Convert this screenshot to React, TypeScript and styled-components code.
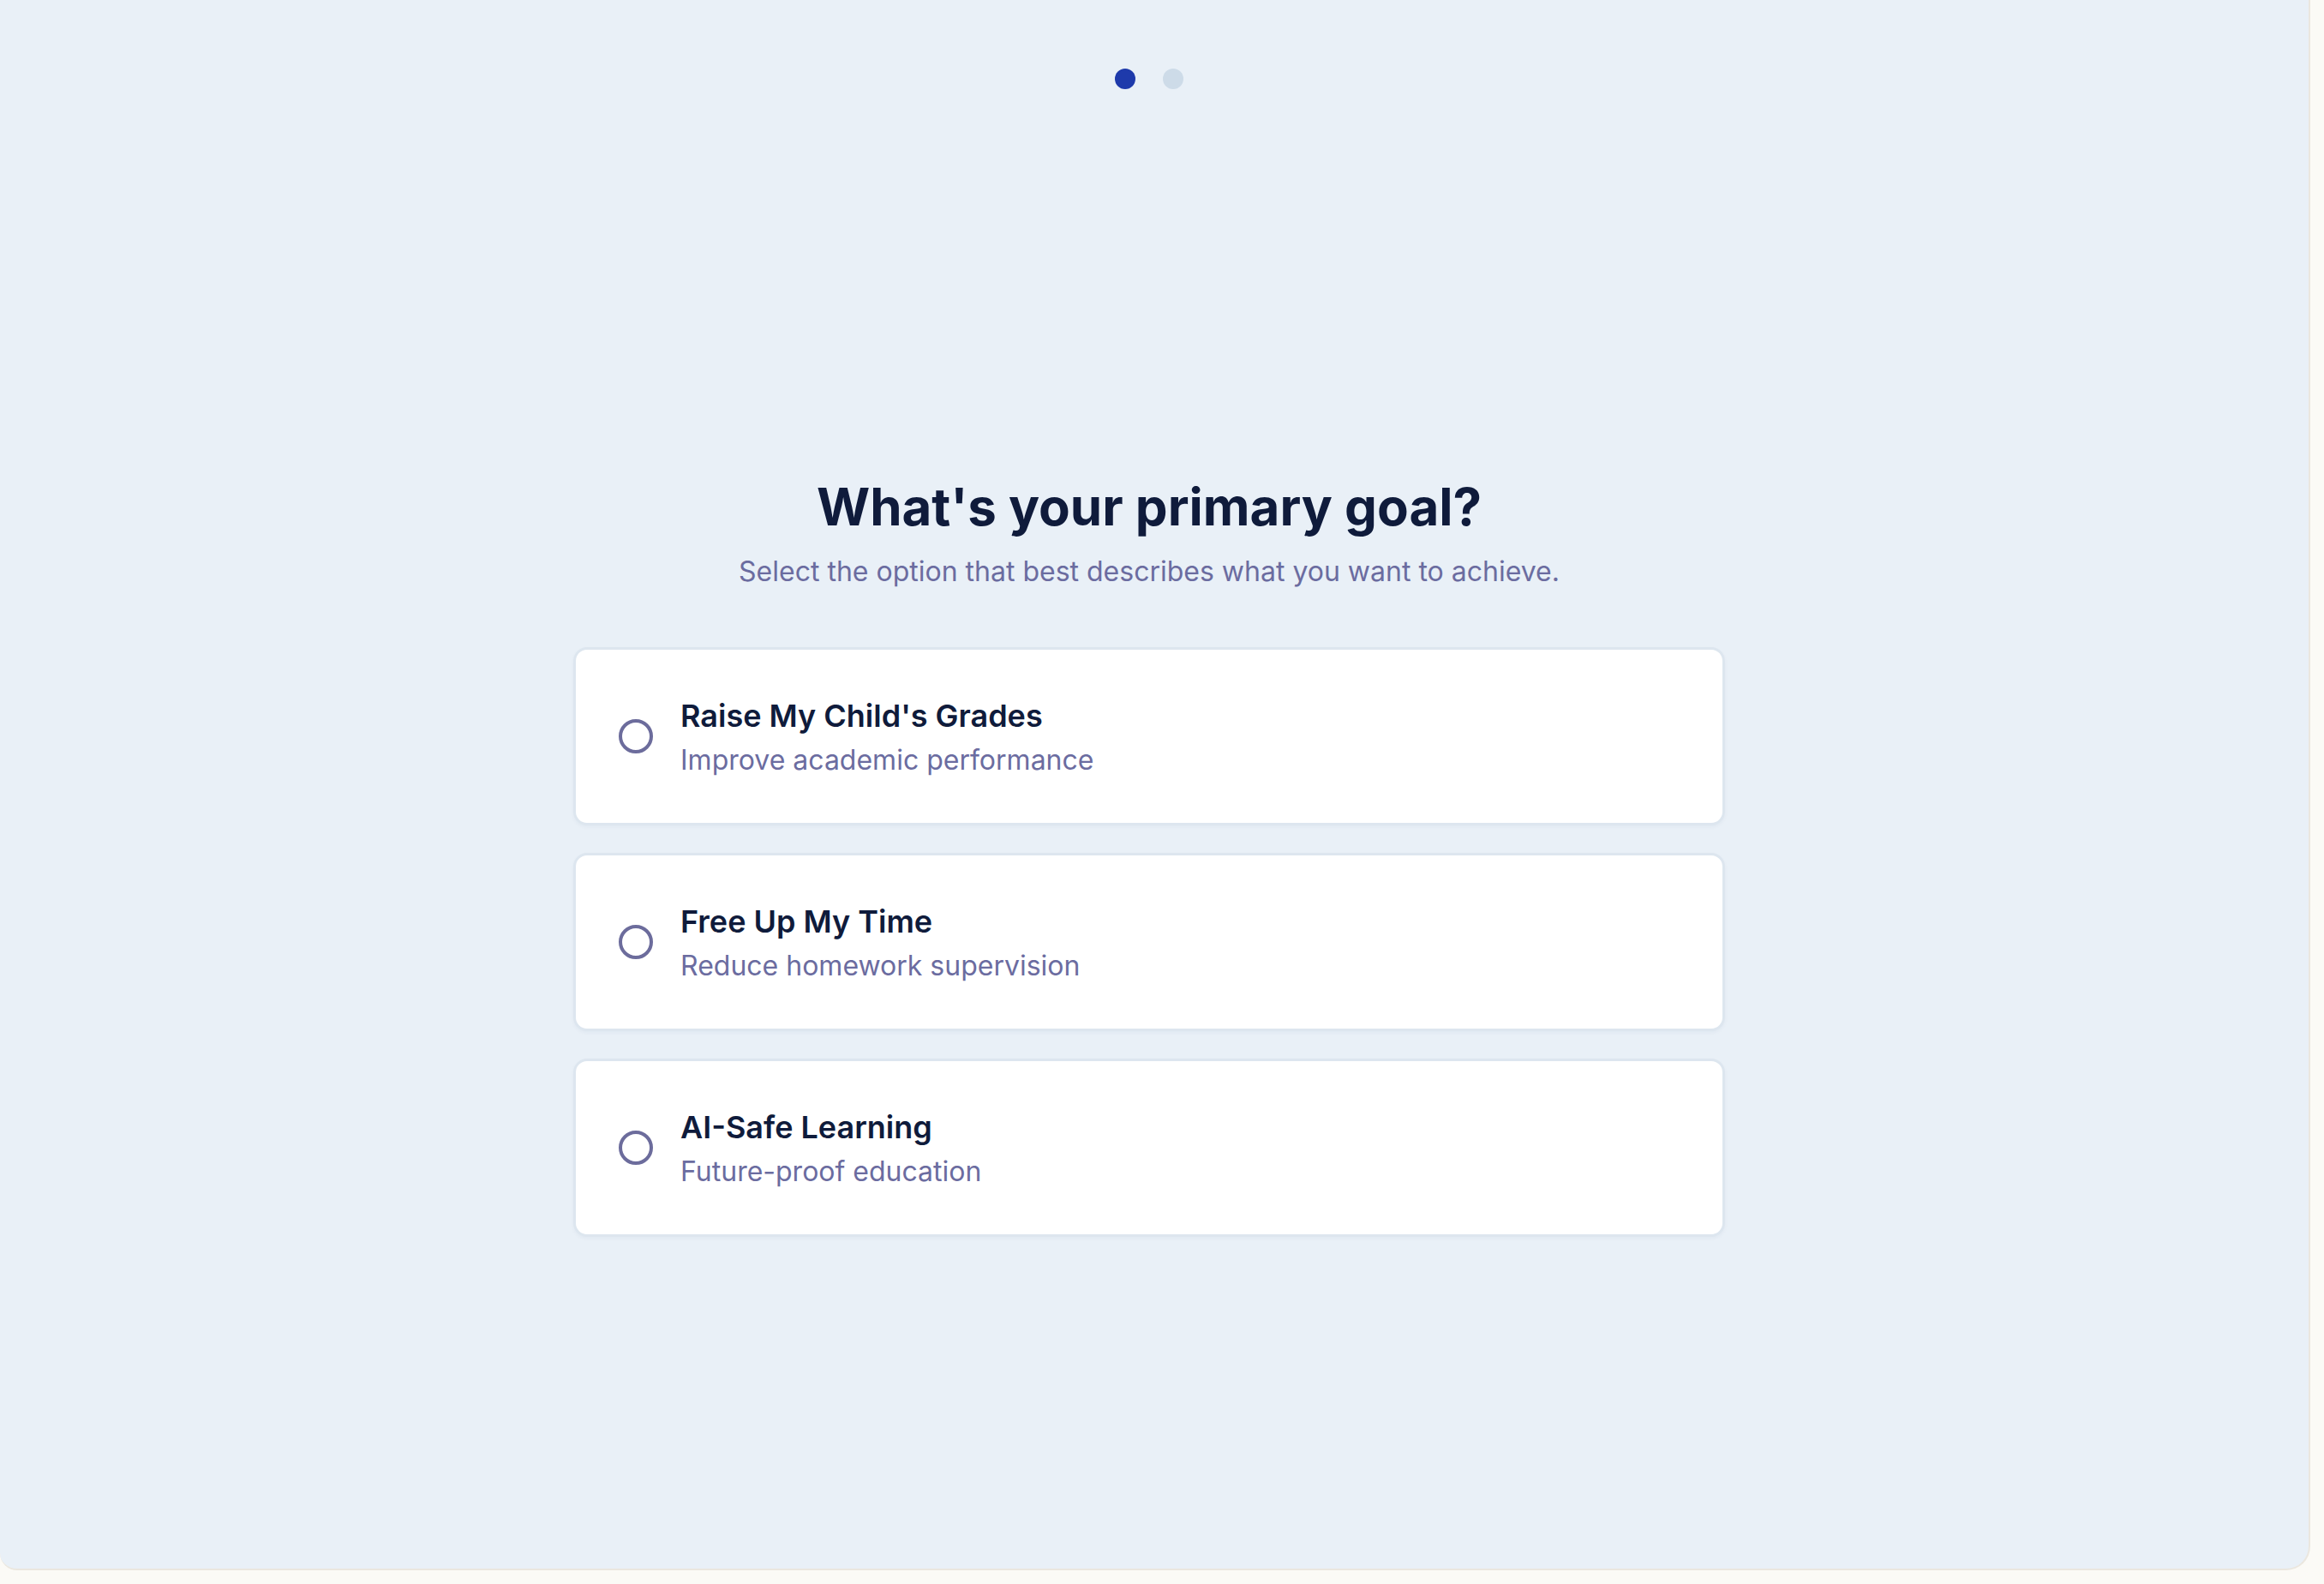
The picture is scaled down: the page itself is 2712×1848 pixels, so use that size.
import styled, { createGlobalStyle } from 'styled-components';

const GlobalStyle = createGlobalStyle`
  html, body {
    margin: 0;
    padding: 0;
    background: #fbfaf6;
  }
  body {
    font-family: Inter, "Noto Sans", sans-serif;
    -webkit-font-smoothing: antialiased;
  }
`;

const Color = {
  PANEL: '#e9f0f7',
  INK: '#0f1b3b',
  MUTED: '#6b6ca0',
  ACTIVE_DOT: '#1e3aab',
  IDLE_DOT: '#cddbe8',
  CARD_BORDER: '#dde6ef',
};

const Panel = styled.main`
  box-sizing: border-box;
  width: 2696px;
  height: 1832px;
  background: ${Color.PANEL};
  border-right: 2px solid #ebe7df;
  border-bottom: 2px solid #ebe7df;
  border-bottom-right-radius: 28px;
  border-bottom-left-radius: 20px;
  display: flex;
  flex-direction: column;
  align-items: center;
  padding: 80px 12px 0 0;
`;

const Steps = styled.div`
  display: flex;
  gap: 32px;
`;

const Dot = styled.span<{ $active?: boolean }>`
  width: 24px;
  height: 24px;
  border-radius: 50%;
  background: ${(p) => (p.$active ? Color.ACTIVE_DOT : Color.IDLE_DOT)};
`;

const Content = styled.section`
  margin-top: 451px;
  width: 1344px;
  display: flex;
  flex-direction: column;
  align-items: center;
`;

const Title = styled.h1`
  margin: 0;
  font-size: 60px;
  line-height: 72px;
  font-weight: 700;
  color: ${Color.INK};
`;

const Lead = styled.p`
  margin: 16px 0 0;
  font-size: 32px;
  line-height: 48px;
  font-weight: 400;
  color: ${Color.MUTED};
`;

const OptionList = styled.div`
  margin-top: 64px;
  width: 100%;
  display: flex;
  flex-direction: column;
  gap: 32px;
`;

const OptionCard = styled.button`
  box-sizing: border-box;
  width: 100%;
  height: 208px;
  display: flex;
  align-items: center;
  gap: 32px;
  padding: 0 48px 0 50px;
  background: #ffffff;
  border: 3px solid ${Color.CARD_BORDER};
  border-radius: 16px;
  box-shadow: 0 2px 4px rgba(30, 60, 110, 0.04);
  font-family: inherit;
  text-align: left;
  cursor: pointer;
`;

const Radio = styled.span`
  box-sizing: border-box;
  flex: none;
  width: 40px;
  height: 40px;
  border-radius: 50%;
  border: 4px solid #6c6c9c;
`;

const OptionText = styled.span`
  display: flex;
  flex-direction: column;
`;

const OptionLabel = styled.span`
  font-size: 36px;
  line-height: 56px;
  font-weight: 600;
  color: ${Color.INK};
`;

const OptionHint = styled.span`
  font-size: 32px;
  line-height: 48px;
  font-weight: 400;
  color: ${Color.MUTED};
`;

const OPTIONS = [
  { title: "Raise My Child's Grades", hint: 'Improve academic performance' },
  { title: 'Free Up My Time', hint: 'Reduce homework supervision' },
  { title: 'AI-Safe Learning', hint: 'Future-proof education' },
];

export default function App() {
  return (
    <>
      <GlobalStyle />
      <Panel>
        <Steps>
          <Dot $active />
          <Dot />
        </Steps>
        <Content>
          <Title>What's your primary goal?</Title>
          <Lead>Select the option that best describes what you want to achieve.</Lead>
          <OptionList>
            {OPTIONS.map((o) => (
              <OptionCard key={o.title} type="button">
                <Radio />
                <OptionText>
                  <OptionLabel>{o.title}</OptionLabel>
                  <OptionHint>{o.hint}</OptionHint>
                </OptionText>
              </OptionCard>
            ))}
          </OptionList>
        </Content>
      </Panel>
    </>
  );
}
